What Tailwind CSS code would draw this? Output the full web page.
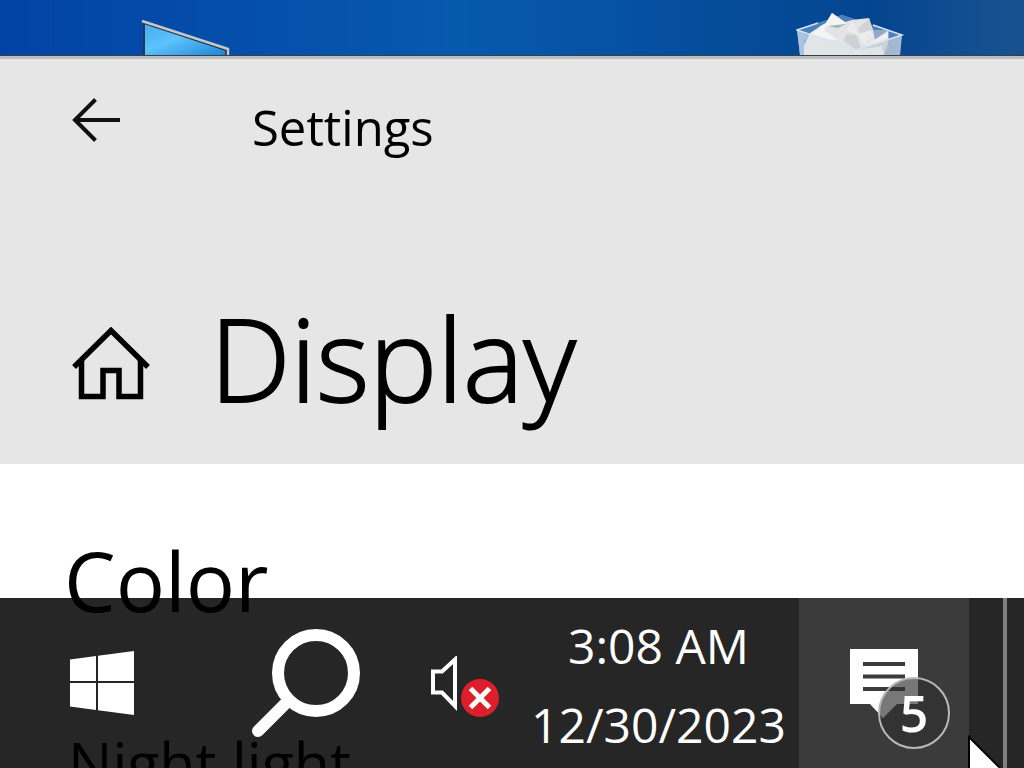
<!DOCTYPE html>
<html lang="en">
<head>
  <meta charset="UTF-8">
  <meta name="viewport" content="width=device-width, initial-scale=1.0">
  <script src="https://cdn.jsdelivr.net/npm/@tailwindcss/browser@4"></script>
  <title>Settings</title>
</head>
<body class="relative h-screen overflow-hidden bg-white font-['Open_Sans','Noto_Sans',sans-serif] text-black">
  <!-- Desktop -->
  <div class="flex h-14 items-end justify-between border-b border-[#34404f] bg-[linear-gradient(to_right,#0243a5,#0759ae_45%,#04458f_85%,#1a5290)] pl-[140px] pr-[119px]">
    <svg class="h-[36px] w-[92px]" viewBox="0 0 92 36" role="img" aria-label="This PC">
      <defs>
        <linearGradient id="screen" x1="0" y1="0" x2="1" y2="1">
          <stop offset="0" stop-color="#45a9ee" />
          <stop offset=".45" stop-color="#5cc3fb" />
          <stop offset="1" stop-color="#1d83d6" />
        </linearGradient>
      </defs>
      <path d="M3 3L87 31V36H3Z" fill="url(#screen)" />
      <path d="M4 36V4L86 31V36" fill="none" stroke="#26384b" stroke-width="2" />
      <path d="M2 2L88 30V36" fill="none" stroke="#c3c8cc" stroke-width="2.5" />
    </svg>
    <svg class="h-[42px] w-[109px]" viewBox="0 0 109 42" role="img" aria-label="Recycle Bin">
      <path d="M1 17L46 2L106 22L104 42H4Z" fill="#8aa9cb" />
      <path d="M1 17L46 2L106 22L60 37Z" fill="#4d7fb8" />
      <path d="M8 42V32L14 20L23 14L30 10L36 0L49 9L56 7L73 5L77 17L93 17L92 31L88 42Z" fill="#e3e4e5" />
      <path d="M23 14L30 10L36 0L50 10L44 14L30 14L27 23Z" fill="#f4f4f4" />
      <path d="M31 13L50 11L42 15Z" fill="#a5b2c0" />
      <path d="M62 16L73 5L76 17L64 20Z" fill="#d2d3d5" />
      <path d="M50 21L60 22L65 35L60 37L48 28Z" fill="#ced1d5" />
      <path d="M12 22L25 15L42 27L30 26Z" fill="#f4f4f4" />
      <path d="M56 9L50 17L62 22L74 17L77 22L68 32Z" fill="#ececec" />
      <path d="M77 17L93 17V24L79 27Z" fill="#8fabc9" />
      <path d="M78 27L92 18V25L68 34Z" fill="#efefef" />
      <path d="M60 37L106 22L104 42H88L86 33Z" fill="#b6c5d6" opacity=".6" />
      <path d="M1 17L4 42H8V28L13 23Z" fill="#a9c3e0" />
      <path d="M22 10L1 17L60 37L106 22L77 12" fill="none" stroke="#d3e4f4" stroke-width="1.5" />
    </svg>
  </div>

  <!-- Settings window -->
  <main>
    <header class="flex h-[408px] flex-col justify-between border-t-3 border-[#bfbfbf] bg-[#e6e6e6] pb-6 pl-[72px] pt-9">
      <div class="flex items-start gap-[132px]">
        <button type="button" aria-label="Back" class="mt-[3px]">
          <svg class="h-[44px] w-[48px]" viewBox="0 0 48 44" fill="none" stroke="#111" stroke-width="4">
            <path d="M48 22H3M23.500 1.500L3 22L23.500 42.500" />
          </svg>
        </button>
        <span class="text-[49px] leading-[64px]">Settings</span>
      </div>
      <div class="flex items-end gap-[60px]">
        <a href="#" aria-label="Home" class="pb-10">
          <svg class="h-[73px] w-[78px]" viewBox="0 0 78 73" fill="none" stroke="#000" stroke-width="5.500">
            <path d="M2 40L39 3.500L76 40" />
            <path d="M9.500 33V69.500H31V43.500H47V69.500H68.500V33" />
          </svg>
        </a>
        <h1 class="text-[114px] font-light leading-[164px] [-webkit-text-stroke:2px_#000]">Display</h1>
      </div>
    </header>
    <section class="pl-16 pt-[60px]">
      <h2 class="text-[82px] leading-[112px]">Color</h2>
      <h3 class="pl-1 pt-[86px] text-[59px] leading-[80px]">Night light</h3>
    </section>
  </main>

  <!-- Taskbar -->
  <footer class="absolute inset-x-0 bottom-0 flex h-[170px] items-stretch bg-black/85 text-white">
    <button type="button" aria-label="Start" class="flex w-[182px] items-center pl-[70px]">
      <svg class="h-[64px] w-[64px]" viewBox="0 0 64 64" fill="#fff">
        <path d="M0 8.500L26 5V30H0ZM28 4.700L64 0V30H28ZM0 32H26V59L0 55.500ZM28 32H64V64L28 59.300Z" />
      </svg>
    </button>
    <button type="button" aria-label="Search" class="flex flex-1 items-center justify-center">
      <svg class="h-[108px] w-[110px]" viewBox="0 0 110 108" fill="none" stroke="#fff" stroke-width="12">
        <circle cx="65" cy="44" r="38" />
        <path d="M38 71L7 102" stroke-linecap="round" />
      </svg>
    </button>
    <button type="button" aria-label="Volume muted" class="flex items-center pt-2">
      <svg class="h-[62px] w-[70px]" viewBox="0 0 70 62" fill="none">
        <path d="M3 15.500H12L25 3.500V50L12 36.500H3Z" stroke="#fff" stroke-width="4" />
        <circle cx="50" cy="42" r="19" fill="#dc1f2b" />
        <path d="M40.500 32.500L59.500 51.500M59.500 32.500L40.500 51.500" stroke="#fff" stroke-width="5" />
      </svg>
    </button>
    <button type="button" class="w-[299px] pl-[18px] pt-1 text-center text-[48px] leading-[79px]">
      <time class="block">3:08 AM</time>
      <time class="block">12/30/2023</time>
    </button>
    <button type="button" aria-label="5 new notifications" class="relative w-[170px] bg-[#3b3b3b]">
      <svg class="absolute left-[51px] top-[51px] h-[70px] w-[68px]" viewBox="0 0 68 70">
        <path d="M0 0H68V55H47L33 69L20 55H0Z" fill="#fff" />
        <path d="M13 15H55M13 27.500H55M13 40H55" stroke="#3b3b3b" stroke-width="4" />
      </svg>
      <span class="absolute left-[79px] top-[79px] flex size-[72px] items-center justify-center rounded-full border-2 border-[#b8b8b8] bg-[#303030]/65 text-[50px] font-semibold leading-[72px]">5</span>
    </button>
    <button type="button" aria-label="Show desktop" class="ml-[34px] w-[21px] border-l-4 border-[#808080]"></button>
  </footer>

  <!-- Mouse pointer -->
  <svg class="absolute bottom-0 left-[968px] h-[33px] w-[36px]" viewBox="0 0 36 33">
    <path d="M1 33V2L32 33" fill="#fff" stroke="#000" stroke-width="2" />
  </svg>
</body>
</html>
